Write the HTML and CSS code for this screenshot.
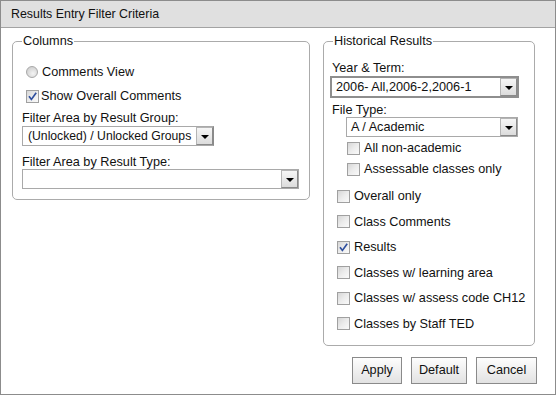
FILE: index.html
```html
<!DOCTYPE html>
<html>
<head>
<meta charset="utf-8">
<link rel="stylesheet" href="styles.css">
</head>
<body>
<div class="window">
  <div class="titlebar">Results Entry Filter Criteria</div>
  <div class="content">
    <fieldset class="group group-left">
      <legend>Columns</legend>
      <div class="row row-radio"><span class="radio"></span><span class="text-radio">Comments View</span></div>
      <div class="row row-check1"><span class="check checked"><svg viewBox="0 0 13 13" width="13" height="13"><path d="M3 6.2 L5.4 9.4 L10.2 2.8" fill="none" stroke="#2f4f9e" stroke-width="1.7"/></svg></span><span class="text-check1">Show Overall Comments</span></div>
      <div class="label label-first">Filter Area by Result Group:</div>
      <div class="select select-group"><span class="select-text">(Unlocked) / Unlocked Groups</span><span class="arrow"><span class="tri"></span></span></div>
      <div class="label label-second">Filter Area by Result Type:</div>
      <div class="select select-type"><span class="select-text"></span><span class="arrow"><span class="tri"></span></span></div>
    </fieldset>
    <div class="right-col">
      <fieldset class="group group-right">
        <legend>Historical Results</legend>
        <div class="label label-year">Year &amp; Term:</div>
        <div class="select select-year"><span class="select-text">2006- All,2006-2,2006-1</span><span class="arrow"><span class="tri"></span></span></div>
        <div class="label label-file">File Type:</div>
        <div class="select select-file"><span class="select-text">A / Academic</span><span class="arrow"><span class="tri"></span></span></div>
        <div class="sub-list">
          <div class="row"><span class="check"></span><span class="text-check">All non-academic</span></div>
          <div class="row"><span class="check"></span><span class="text-check">Assessable classes only</span></div>
        </div>
        <div class="main-list">
          <div class="row"><span class="check"></span><span class="text-check">Overall only</span></div>
          <div class="row"><span class="check"></span><span class="text-check">Class Comments</span></div>
          <div class="row"><span class="check checked"><svg viewBox="0 0 13 13" width="13" height="13"><path d="M3 6.2 L5.4 9.4 L10.2 2.8" fill="none" stroke="#2f4f9e" stroke-width="1.7"/></svg></span><span class="text-check">Results</span></div>
          <div class="row"><span class="check"></span><span class="text-check">Classes w/ learning area</span></div>
          <div class="row"><span class="check"></span><span class="text-check">Classes w/ assess code CH12</span></div>
          <div class="row"><span class="check"></span><span class="text-check">Classes by Staff TED</span></div>
        </div>
      </fieldset>
      <div class="buttons">
        <button class="btn btn-apply">Apply</button>
        <button class="btn btn-default">Default</button>
        <button class="btn btn-cancel">Cancel</button>
      </div>
    </div>
  </div>
</div>
</body>
</html>
```
FILE: styles.css
```css
html, body {
  margin: 0;
  padding: 0;
  background: #fff;
}
body {
  font-family: "Liberation Sans", Arial, sans-serif;
  font-size: 12.7px;
  color: #111;
}
.window {
  width: 556px;
  height: 395px;
  box-sizing: border-box;
  border: 1px solid #8c8c8c;
  background: #fff;
}
.titlebar {
  height: 26px;
  line-height: 26px;
  padding-left: 10px;
  background: #e0e0e0;
  border-bottom: 1px solid #a3a3a3;
  font-size: 12.4px;
  color: #111;
}
.content {
  display: flex;
  align-items: flex-start;
  padding: 6px 0 0 11px;
  gap: 13px;
}
.group {
  margin: 0;
  padding: 0 0 10px 0;
  border: 1px solid #ababab;
  border-radius: 5px;
  min-width: 0;
  box-sizing: border-box;
  display: flex;
  flex-direction: column;
}
.group legend {
  margin-left: 9px;
  padding: 0 1px;
  font-size: 12.7px;
  line-height: 14px;
}
.group-left {
  width: 298px;
  padding-left: 9px;
}
.group-left legend {
  margin-left: 0;
}
.group-right {
  width: 212px;
  padding-left: 0;
  padding-bottom: 12px;
}
.row {
  display: flex;
  align-items: center;
  height: 18px;
  font-size: 12.7px;
}
.row-radio {
  margin-top: 15px;
  padding-left: 4px;
}
.row-check1 {
  margin-top: 6px;
  padding-left: 4px;
}
.radio {
  width: 12px;
  height: 12px;
  box-sizing: border-box;
  border: 1px solid #a8a8a8;
  border-radius: 50%;
  background: radial-gradient(circle at 60% 65%, #f4f4f4 0%, #dadada 55%, #c8c8c8 100%);
  flex: none;
}
.text-radio {
  margin-left: 4px;
}
.check {
  width: 13px;
  height: 13px;
  box-sizing: border-box;
  border: 1px solid #a0a0a0;
  background: linear-gradient(135deg, #d6d6d6 0%, #ececec 50%, #fafafa 100%);
  flex: none;
  position: relative;
}
.check svg {
  position: absolute;
  left: -1px;
  top: -1px;
}
.text-check1 {
  margin-left: 2px;
}
.text-check {
  margin-left: 4px;
}
.label {
  line-height: 14px;
  height: 14px;
  font-size: 12.7px;
}
.label-first {
  margin-top: 6px;
}
.label-second {
  margin-top: 9px;
}
.select {
  display: flex;
  align-items: stretch;
  height: 20px;
  box-sizing: border-box;
  border: 1px solid #a9a9a9;
  background: #fff;
}
.select-text {
  flex: 1;
  min-width: 0;
  padding-left: 5px;
  line-height: 18px;
  font-size: 12.7px;
  white-space: nowrap;
}
.arrow {
  width: 17px;
  box-sizing: border-box;
  border: 1px solid #8a8a8a;
  border-top-color: #b5b5b5;
  border-left-color: #b5b5b5;
  background: linear-gradient(#f6f6f6, #dcdcdc);
  display: flex;
  align-items: center;
  justify-content: center;
  flex: none;
}
.tri {
  width: 0;
  height: 0;
  border-left: 4px solid transparent;
  border-right: 4px solid transparent;
  border-top: 4px solid #000;
  margin-top: 1px;
}
.select-group {
  width: 192px;
  margin-top: 1px;
  border-right-color: #8a8a8a;
}
.select-group .select-text {
  font-size: 12.2px;
  padding-left: 5px;
}
.select-type {
  width: 277px;
}
.label-year {
  margin-top: 13px;
  margin-left: 8px;
}
.select-year {
  width: 189px;
  height: 22px;
  margin-top: 1px;
  margin-left: 6px;
  border: 2px solid #8e8e8e;
}
.select-year .select-text {
  padding-left: 4px;
}
.label-file {
  margin-top: 5px;
  margin-left: 8px;
}
.select-file {
  width: 172px;
  margin-left: 22px;
}
.select-file .select-text {
  padding-left: 4px;
}
.sub-list {
  display: flex;
  flex-direction: column;
  gap: 3px;
  margin-top: 2px;
  padding-left: 23px;
}
.main-list {
  display: flex;
  flex-direction: column;
  gap: 7.6px;
  margin-top: 9px;
  padding-left: 13px;
}
.buttons {
  display: flex;
  justify-content: flex-end;
  gap: 9px;
  margin-top: 11px;
  margin-right: -2px;
}
.right-col {
  display: flex;
  flex-direction: column;
  width: 212px;
}
.btn {
  height: 27px;
  box-sizing: border-box;
  border: 1px solid #8a8a8a;
  background: linear-gradient(#fdfdfd, #e2e2e2);
  font-family: "Liberation Sans", Arial, sans-serif;
  font-size: 12.7px;
  color: #111;
  padding: 0;
  border-radius: 0;
}
.btn-apply { width: 50px; }
.btn-default { width: 56px; }
.btn-cancel { width: 61px; }
```
